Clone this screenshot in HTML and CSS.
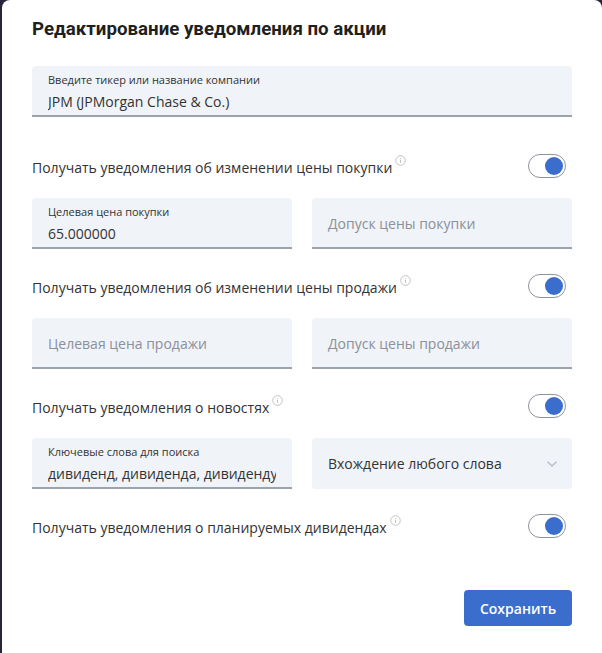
FILE: index.html
```html
<!DOCTYPE html>
<html lang="ru">
<head>
    <meta charset="UTF-8">
    <meta name="viewport" content="width=device-width, initial-scale=1.0">
    <title>Редактирование уведомления</title>
    <link rel="stylesheet" href="styles.css">
</head>
<body>
    <div class="modal">
        <h2 class="modal-title">Редактирование уведомления по акции</h2>

        <div class="field field-filled">
            <span class="field-label">Введите тикер или название компании</span>
            <span class="field-value">JPM (JPMorgan Chase &amp; Co.)</span>
        </div>

        <div class="switch-row switch-row-first">
            <span class="switch-text">Получать уведомления об изменении цены покупки<svg class="info" viewBox="0 0 12 12"><circle cx="6" cy="6" r="5.2" fill="none" stroke="#b4b8bf" stroke-width="0.9"/><path d="M6 5.2v3.4M6 3.4v0.8" stroke="#b4b8bf" stroke-width="1"/></svg></span>
            <span class="switch"><span class="knob"></span></span>
        </div>
        <div class="field-pair">
            <div class="field field-filled">
                <span class="field-label">Целевая цена покупки</span>
                <span class="field-value">65.000000</span>
            </div>
            <div class="field field-empty">
                <span class="placeholder">Допуск цены покупки</span>
            </div>
        </div>

        <div class="switch-row">
            <span class="switch-text">Получать уведомления об изменении цены продажи<svg class="info" viewBox="0 0 12 12"><circle cx="6" cy="6" r="5.2" fill="none" stroke="#b4b8bf" stroke-width="0.9"/><path d="M6 5.2v3.4M6 3.4v0.8" stroke="#b4b8bf" stroke-width="1"/></svg></span>
            <span class="switch"><span class="knob"></span></span>
        </div>
        <div class="field-pair">
            <div class="field field-empty">
                <span class="placeholder">Целевая цена продажи</span>
            </div>
            <div class="field field-empty">
                <span class="placeholder">Допуск цены продажи</span>
            </div>
        </div>

        <div class="switch-row">
            <span class="switch-text">Получать уведомления о новостях<svg class="info" viewBox="0 0 12 12"><circle cx="6" cy="6" r="5.2" fill="none" stroke="#b4b8bf" stroke-width="0.9"/><path d="M6 5.2v3.4M6 3.4v0.8" stroke="#b4b8bf" stroke-width="1"/></svg></span>
            <span class="switch"><span class="knob"></span></span>
        </div>
        <div class="field-pair">
            <div class="field field-filled">
                <span class="field-label">Ключевые слова для поиска</span>
                <span class="field-value">дивиденд, дивиденда, дивиденду</span>
            </div>
            <div class="field field-select">
                <span class="select-value">Вхождение любого слова</span>
                <svg class="chevron" viewBox="0 0 12 8"><path d="M1.5 1.8l4.5 4.2 4.5-4.2" fill="none" stroke="#b9bec6" stroke-width="1.4"/></svg>
            </div>
        </div>

        <div class="switch-row">
            <span class="switch-text">Получать уведомления о планируемых дивидендах<svg class="info" viewBox="0 0 12 12"><circle cx="6" cy="6" r="5.2" fill="none" stroke="#b4b8bf" stroke-width="0.9"/><path d="M6 5.2v3.4M6 3.4v0.8" stroke="#b4b8bf" stroke-width="1"/></svg></span>
            <span class="switch"><span class="knob"></span></span>
        </div>

        <div class="actions">
            <button class="save-button">Сохранить</button>
        </div>
    </div>
</body>
</html>
```

FILE: styles.css
```css
body {
    margin: 0;
    padding: 0;
    background-color: #27253a;
    font-family: "Open Sans", Arial, sans-serif;
    color: #333;
}

.modal {
    margin-left: 2px;
    width: 600px;
    height: 653px;
    box-sizing: border-box;
    padding: 18px 30px 0 30px;
    background-color: #fff;
    border-radius: 8px 8px 0 0;
}

.modal-title {
    margin: 0 0 26px 0;
    font-family: Roboto, Arial, sans-serif;
    font-size: 18.7px;
    font-weight: 700;
    color: #1f1f1f;
    line-height: 22px;
}

.field {
    box-sizing: border-box;
    height: 51px;
    background-color: #f0f3f8;
    border-radius: 4px 4px 0 0;
    padding: 0 16px;
    display: flex;
    flex-direction: column;
    justify-content: center;
    min-width: 0;
}

.field-filled,
.field-empty {
    border-bottom: 2px solid #9ba3ad;
}

.field-label {
    font-size: 11px;
    line-height: 15px;
    color: #333;
}

.field-value {
    font-size: 14px;
    line-height: 20px;
    margin-top: 5px;
    margin-bottom: -2px;
    color: #333;
    white-space: nowrap;
    overflow: hidden;
}

.placeholder {
    font-size: 14px;
    color: #8b9099;
    padding-top: 2px;
}

.field-select {
    flex-direction: row;
    align-items: center;
    justify-content: space-between;
    border-radius: 4px;
}

.select-value {
    font-size: 14px;
    color: #333;
}

.chevron {
    width: 12px;
    height: 8px;
    margin-right: -2px;
}

.field-pair {
    display: grid;
    grid-template-columns: 1fr 1fr;
    gap: 20px;
}

.switch-row {
    display: flex;
    justify-content: space-between;
    align-items: center;
    height: 24px;
    margin: 25px 6px 20px 0;
}

.switch-row-first {
    margin-top: 37px;
}

.switch-text {
    font-size: 14px;
    color: #333;
}

.info {
    width: 11px;
    height: 11px;
    vertical-align: 7px;
    margin-left: 3px;
}

.switch {
    box-sizing: border-box;
    width: 38px;
    height: 24px;
    border: 1px solid #8d939c;
    border-radius: 12px;
    display: flex;
    justify-content: flex-end;
    align-items: center;
    padding: 2px;
}

.knob {
    width: 18px;
    height: 18px;
    border-radius: 50%;
    background-color: #3b6dcd;
}

.actions {
    display: flex;
    justify-content: flex-end;
    margin-top: 52px;
}

.save-button {
    background-color: #3b6dcd;
    color: #fff;
    border: none;
    border-radius: 4px;
    width: 108px;
    height: 36px;
    font-family: "Open Sans", Arial, sans-serif;
    font-size: 14px;
    font-weight: 600;
    cursor: pointer;
}
```
